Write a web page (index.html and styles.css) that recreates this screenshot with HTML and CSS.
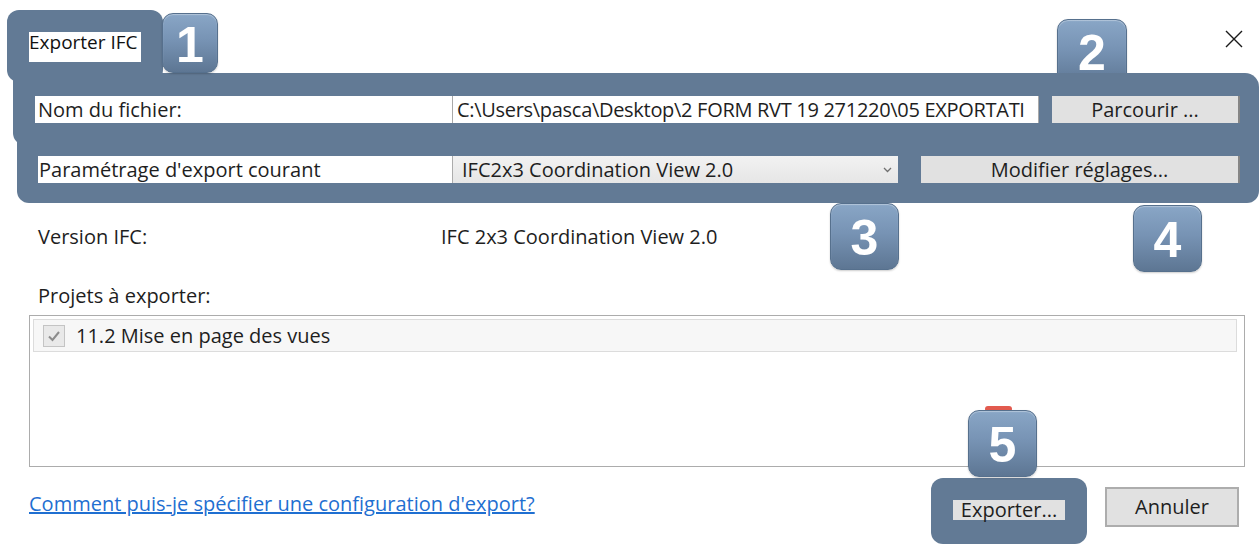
FILE: index.html
```html
<!DOCTYPE html>
<html lang="fr">
<head>
<meta charset="utf-8">
<title>Exporter IFC</title>
<link rel="stylesheet" href="styles.css">
</head>
<body>
<div class="dialog">
  <div class="overlay o-title"></div>
  <div class="overlay o-row1"></div>
  <div class="overlay o-row2"></div>
  <div class="overlay o-export"></div>
  <div class="badge b2">2</div>
  <div class="red-tab"></div>

  <div class="content">
    <header class="header">
      <div class="title">Exporter IFC</div>
      <div class="close">
        <svg width="18" height="18" viewBox="0 0 18 18"><path d="M1 1 L17 17 M17 1 L1 17" stroke="#1a1a1a" stroke-width="1.4" fill="none"/></svg>
      </div>
    </header>

    <div class="row row1">
      <div class="label label1">Nom du fichier:</div>
      <div class="input">C:\Users\pasca\Desktop\2 FORM RVT 19 271220\05 EXPORTATI</div>
      <div class="btn btn-browse">Parcourir ...</div>
    </div>

    <div class="row row2">
      <div class="label label2">Paramétrage d'export courant</div>
      <div class="select">
        <span>IFC2x3 Coordination View 2.0</span>
        <svg width="9" height="6" viewBox="0 0 9 6"><path d="M1 1 L4.5 4.5 L8 1" stroke="#707070" stroke-width="1.3" fill="none"/></svg>
      </div>
      <div class="btn btn-modify">Modifier réglages...</div>
    </div>

    <div class="info">
      <span class="info-label">Version IFC:</span>
      <span class="info-value">IFC 2x3 Coordination View 2.0</span>
    </div>

    <div class="section-label">Projets à exporter:</div>

    <div class="list">
      <div class="list-item">
        <span class="check">
          <svg width="16" height="16" viewBox="0 0 16 16"><path d="M3 8.5 L6.5 12 L13 4" stroke="#8c8c8c" stroke-width="2" fill="none"/></svg>
        </span>
        <span>11.2 Mise en page des vues</span>
      </div>
    </div>

    <footer class="footer">
      <a class="help" href="#">Comment puis-je spécifier une configuration d'export?</a>
      <div class="btn btn-export">Exporter...</div>
      <div class="btn btn-cancel">Annuler</div>
    </footer>
  </div>

  <div class="badge b1">1</div>
  <div class="badge b3">3</div>
  <div class="badge b4">4</div>
  <div class="badge b5">5</div>
</div>
</body>
</html>
```

FILE: styles.css
```css
* { box-sizing: border-box; }

html, body {
  margin: 0;
  padding: 0;
  background: #ffffff;
}

body {
  font-family: "Open Sans", "Noto Sans", sans-serif;
  font-size: 20px;
  color: #1e1e1e;
}

.dialog {
  position: relative;
  width: 1260px;
  height: 552px;
  overflow: hidden;
  background: #ffffff;
}

/* annotation overlays */
.overlay {
  position: absolute;
  background: #627a95;
  z-index: 2;
}
.o-title { left: 7px; top: 10px; width: 156px; height: 72px; border-radius: 12px; }
.o-row1 { left: 13px; top: 73px; width: 1246px; height: 72px; border-radius: 0 14px 0 12px; }
.o-row2 { left: 17px; top: 138px; width: 1242px; height: 65px; border-radius: 0 0 12px 12px; }
.o-export { left: 931px; top: 478px; width: 156px; height: 66px; border-radius: 12px; }

.badge {
  position: absolute;
  z-index: 4;
  display: flex;
  align-items: center;
  justify-content: center;
  padding-top: 3px;
  border-radius: 11px;
  border: 1px solid #56708d;
  background: linear-gradient(180deg, #89a6c6 0%, #7793b4 45%, #5d7693 100%);
  box-shadow: inset 0 1px 1px rgba(255,255,255,0.35), 0 1px 2px rgba(0,0,0,0.2);
  color: #ffffff;
  font-family: "Liberation Sans", Arial, sans-serif;
  font-weight: bold;
  font-size: 50px;
  line-height: 1;
}
.b1 { left: 162px; top: 13px; width: 56px; height: 60px; }
.b2 { left: 1057px; top: 19px; width: 70px; height: 68px; z-index: 1; padding-top: 0; }
.b3 { left: 830px; top: 203px; width: 69px; height: 67px; }
.b4 { left: 1133px; top: 205px; width: 69px; height: 67px; }
.b5 { left: 968px; top: 410px; width: 69px; height: 67px; }

.red-tab {
  position: absolute;
  z-index: 3;
  left: 985px;
  top: 406px;
  width: 27px;
  height: 6px;
  border-radius: 3px;
  background: #e25a4e;
}

/* dialog content */
.content {
  position: relative;
  z-index: 3;
}

.header {
  height: 96px;
  display: flex;
  justify-content: space-between;
  align-items: flex-start;
}

.title {
  margin: 32px 0 0 29px;
  width: 112px;
  height: 30px;
  background: #ffffff;
  font-size: 19px;
  line-height: 20px;
  white-space: nowrap;
  color: #111;
}

.close {
  margin: 30px 17px 0 0;
  width: 18px;
  height: 18px;
}
.close svg { display: block; }

.row {
  display: flex;
  height: 27px;
}
.row1 { margin-left: 35px; }
.row2 { margin-top: 33px; margin-left: 38px; }

.label {
  background: #ffffff;
  line-height: 27px;
  padding-left: 3px;
  white-space: nowrap;
}
.label1 { width: 417px; }
.label2 { width: 414px; padding-left: 1px; }

.input {
  width: 587px;
  background: #ffffff;
  border-left: 1px solid #a9a9a9;
  border-right: 1px solid #a9a9a9;
  padding-left: 4px;
  line-height: 27px;
  white-space: nowrap;
  overflow: hidden;
  letter-spacing: -0.3px;
}

.btn {
  background: #e1e1e1;
  text-align: center;
  white-space: nowrap;
}

.btn-browse {
  margin-left: 13px;
  width: 188px;
  line-height: 27px;
  border-right: 2px solid #858585;
}

.select {
  width: 446px;
  background: linear-gradient(180deg, #f2f2f2, #e6e6e6);
  border-left: 1px solid #acacac;
  padding: 0 6px 0 9px;
  display: flex;
  align-items: center;
  justify-content: space-between;
  line-height: 27px;
}
.select svg { display: block; }

.btn-modify {
  margin-left: 23px;
  width: 319px;
  line-height: 27px;
  border-right: 2px solid #858585;
}

.info {
  margin-top: 40px;
  height: 28px;
  line-height: 28px;
  display: flex;
  padding-left: 38px;
}
.info-label { width: 403px; }

.section-label {
  margin-top: 31px;
  padding-left: 38px;
  line-height: 28px;
}

.list {
  margin: 5px 0 0 29px;
  width: 1216px;
  height: 152px;
  border: 1px solid #acacac;
  padding: 3px 7px 0 3px;
}

.list-item {
  height: 33px;
  background: #f7f7f7;
  border: 1px solid #dcdcdc;
  display: flex;
  align-items: center;
  padding-left: 9px;
}

.check {
  width: 22px;
  height: 22px;
  border: 1px solid #c4c4c4;
  background: #e9e9e9;
  margin-right: 11px;
  display: flex;
  align-items: center;
  justify-content: center;
}
.check svg { display: block; }

.footer {
  margin-top: 20px;
  height: 40px;
  display: flex;
  align-items: center;
  padding-left: 29px;
  padding-right: 21px;
}

.help {
  color: #1f6fd1;
  text-decoration: underline;
  margin-top: -8px;
  margin-right: auto;
}

.btn-export {
  width: 112px;
  height: 20px;
  line-height: 20px;
  margin-top: 6px;
  margin-right: 40px;
}

.btn-cancel {
  width: 134px;
  height: 40px;
  line-height: 36px;
  border: 2px solid #adadad;
}
```
